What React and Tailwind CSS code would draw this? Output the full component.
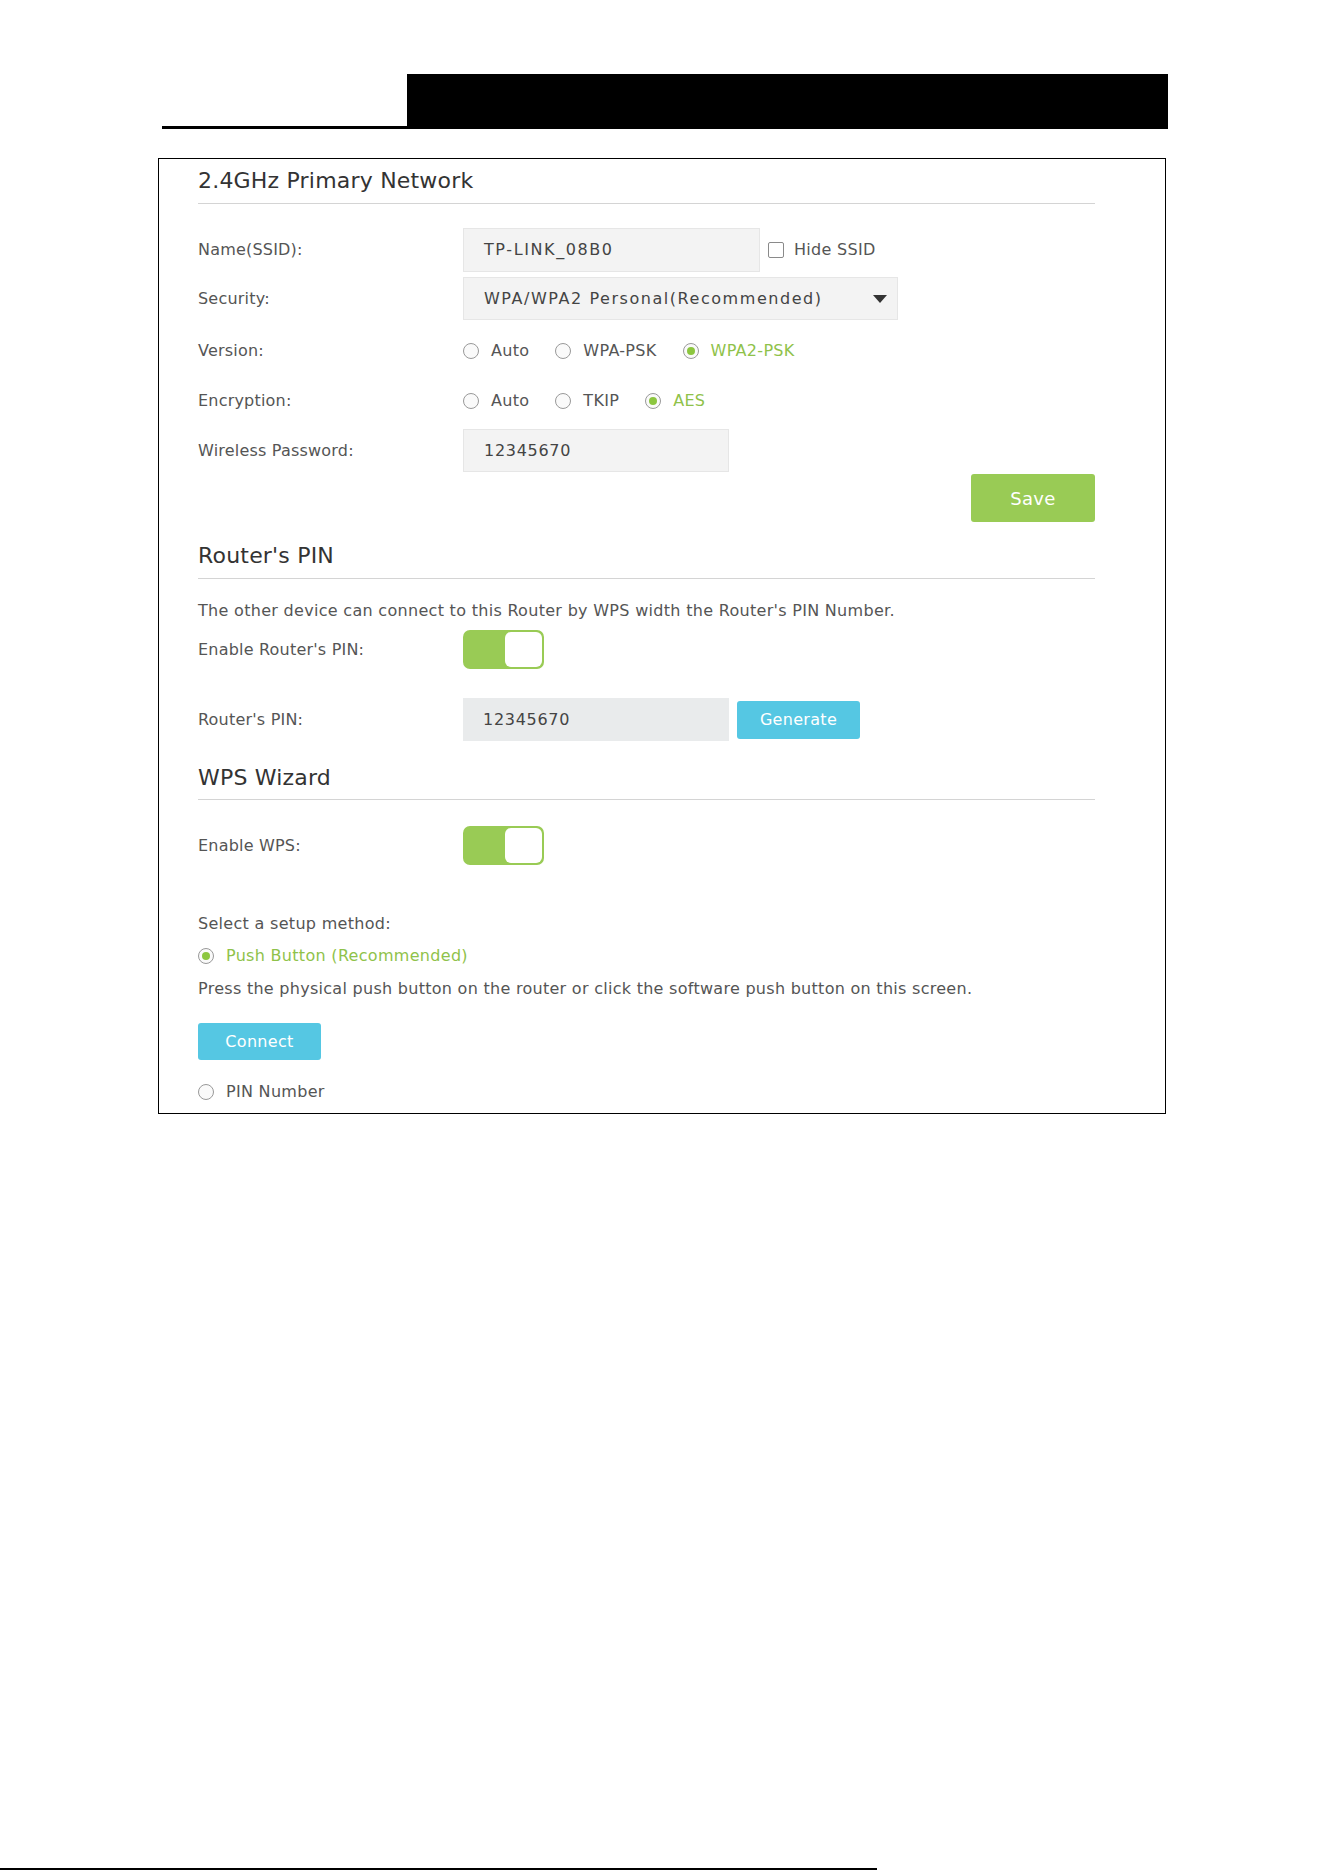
import { useState } from "react";

function Label({ children }) {
  return <div className="w-[265px] shrink-0 text-[16px] tracking-[0.2px] text-[#555]">{children}</div>;
}

function Radio({ label, checked }) {
  return (
    <span className="flex items-center gap-[12px]">
      <span className="grid h-[16px] w-[16px] place-items-center rounded-full border border-[#999] bg-[#fafafa]">
        {checked && <span className="h-[8px] w-[8px] rounded-full bg-[#8cc63f]" />}
      </span>
      <span className={checked ? "text-[#8fc24a]" : "text-[#555]"}>{label}</span>
    </span>
  );
}

function Toggle() {
  return (
    <div className="flex h-[39px] w-[81px] justify-end rounded-[7px] bg-[#99cb55] p-[2px]">
      <div className="h-[35px] w-[37px] rounded-[6px] bg-white" />
    </div>
  );
}

function SectionTitle({ children, className }) {
  return (
    <h2 className={"border-b border-[#d4d4d4] text-[22px] leading-[28px] tracking-[0.2px] text-[#333] " + className}>{children}</h2>
  );
}

export default function App() {
  const [hideSsid, setHideSsid] = useState(false);

  return (
    <div className="flex h-[1872px] w-[1324px] flex-col bg-white font-['DejaVu_Sans',sans-serif]">
      <header className="ml-[162px] mt-[74px] flex items-end">
        <div className="h-[3px] w-[245px] bg-black" />
        <div className="h-[55px] w-[761px] bg-black" />
      </header>

      <section className="ml-[158px] mt-[29px] h-[956px] w-[1008px] border border-black pl-[39px] pr-[70px] text-[16px] tracking-[0.3px] text-[#555]">
        <SectionTitle className="pt-[8px] pb-[8px]">2.4GHz Primary Network</SectionTitle>

        <div className="mt-[24px] flex h-[44px] items-center">
          <Label>Name(SSID):</Label>
          <div className="flex h-[44px] w-[297px] items-center border border-[#e6e6e6] bg-[#f3f3f3] pl-[20px] tracking-[1.6px] text-[#444]">TP-LINK_08B0</div>
          <button type="button" onClick={() => setHideSsid(!hideSsid)} className="ml-[8px] flex items-center gap-[10px] tracking-[0.3px]">
            <span className="h-[16px] w-[16px] rounded-[2px] border border-[#8a8a8a] bg-white" />
            <span className="text-[#555]">Hide SSID</span>
          </button>
        </div>

        <div className="mt-[5px] flex h-[43px] items-center">
          <Label>Security:</Label>
          <div className="flex h-[43px] w-[435px] items-center justify-between border border-[#e6e6e6] bg-[#f3f3f3] pl-[20px] pr-[10px] tracking-[1.55px] text-[#444]">
            <span>WPA/WPA2 Personal(Recommended)</span>
            <svg width="14" height="8" viewBox="0 0 14 8"><path d="M0 0h14L7 8z" fill="#333" /></svg>
          </div>
        </div>

        <div className="mt-[11px] flex h-[40px] items-center">
          <Label>Version:</Label>
          <div className="flex items-center gap-[26px]">
            <Radio label="Auto" />
            <Radio label="WPA-PSK" />
            <Radio label="WPA2-PSK" checked />
          </div>
        </div>

        <div className="mt-[10px] flex h-[40px] items-center">
          <Label>Encryption:</Label>
          <div className="flex items-center gap-[26px]">
            <Radio label="Auto" />
            <Radio label="TKIP" />
            <Radio label="AES" checked />
          </div>
        </div>

        <div className="mt-[8px] flex h-[43px] items-center">
          <Label>Wireless Password:</Label>
          <div className="flex h-[43px] w-[266px] items-center border border-[#e6e6e6] bg-[#f3f3f3] pl-[20px] tracking-[0.7px] text-[#444]">12345670</div>
        </div>

        <div className="mt-[2px] flex justify-end">
          <button type="button" className="h-[48px] w-[124px] rounded-[3px] bg-[#99cb55] text-[18px] tracking-[0.3px] text-white">Save</button>
        </div>

        <SectionTitle className="mt-[20px] pb-[8px]">Router's PIN</SectionTitle>

        <p className="mt-[20px] leading-[24px]">The other device can connect to this Router by WPS width the Router's PIN Number.</p>

        <div className="mt-[7px] flex h-[39px] items-center">
          <Label>Enable Router's PIN:</Label>
          <Toggle />
        </div>

        <div className="mt-[29px] flex h-[43px] items-center">
          <Label>Router's PIN:</Label>
          <div className="flex h-[43px] w-[266px] items-center bg-[#e9ebec] pl-[20px] tracking-[0.7px] text-[#444]">12345670</div>
          <button type="button" className="ml-[8px] h-[38px] w-[123px] rounded-[3px] bg-[#55c7e3] text-white">Generate</button>
        </div>

        <SectionTitle className="mt-[23px] pb-[7px]">WPS Wizard</SectionTitle>

        <div className="mt-[26px] flex h-[39px] items-center">
          <Label>Enable WPS:</Label>
          <Toggle />
        </div>

        <p className="mt-[47px] leading-[24px]">Select a setup method:</p>
        <div className="mt-[8px] flex h-[24px] items-center">
          <Radio label="Push Button (Recommended)" checked />
        </div>
        <p className="mt-[9px] leading-[24px] tracking-[0.28px]">Press the physical push button on the router or click the software push button on this screen.</p>
        <button type="button" className="mt-[22px] h-[37px] w-[123px] rounded-[3px] bg-[#55c7e3] text-white">Connect</button>
        <div className="mt-[20px] flex h-[24px] items-center">
          <Radio label="PIN Number" />
        </div>
      </section>

      <footer className="mb-[2px] mt-auto h-[2px] w-[877px] bg-black" />
    </div>
  );
}
